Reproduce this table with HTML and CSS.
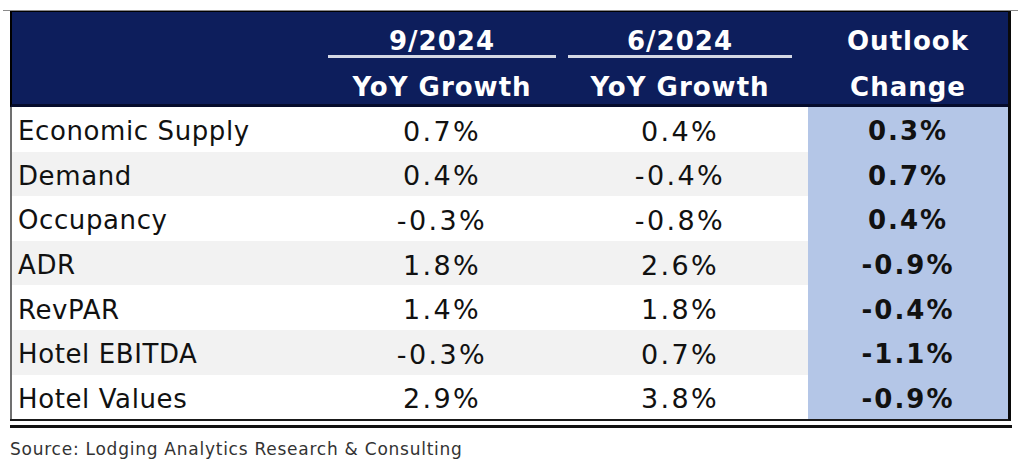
FILE: index.html
```html
<!DOCTYPE html>
<html>
<head>
<meta charset="utf-8">
<link rel="stylesheet" href="styles.css">
</head>
<body>
<div class="page">
  <div class="frame">
    <div class="table">
      <div class="head">
        <div class="hcell"></div>
        <div class="hcell">
          <div class="hline">9/2024</div>
          <div class="uline"></div>
          <div class="hline">YoY Growth</div>
        </div>
        <div class="hcell c3">
          <div class="hline">6/2024</div>
          <div class="uline"></div>
          <div class="hline">YoY Growth</div>
        </div>
        <div class="hcell">
          <div class="hline">Outlook</div>
          <div class="uline none"></div>
          <div class="hline">Change</div>
        </div>
      </div>
      <div class="body">
        <div class="row"><div class="lbl">Economic Supply</div><div class="num">0.7%</div><div class="num c3">0.4%</div><div class="chg">0.3%</div></div>
        <div class="row alt"><div class="lbl">Demand</div><div class="num">0.4%</div><div class="num c3">-0.4%</div><div class="chg">0.7%</div></div>
        <div class="row"><div class="lbl">Occupancy</div><div class="num">-0.3%</div><div class="num c3">-0.8%</div><div class="chg">0.4%</div></div>
        <div class="row alt"><div class="lbl">ADR</div><div class="num">1.8%</div><div class="num c3">2.6%</div><div class="chg">-0.9%</div></div>
        <div class="row"><div class="lbl">RevPAR</div><div class="num">1.4%</div><div class="num c3">1.8%</div><div class="chg">-0.4%</div></div>
        <div class="row alt"><div class="lbl">Hotel EBITDA</div><div class="num">-0.3%</div><div class="num c3">0.7%</div><div class="chg">-1.1%</div></div>
        <div class="row"><div class="lbl">Hotel Values</div><div class="num">2.9%</div><div class="num c3">3.8%</div><div class="chg">-0.9%</div></div>
      </div>
    </div>
    <div class="thick"></div>
  </div>
  <div class="source">Source: Lodging Analytics Research &amp; Consulting</div>
</div>
</body>
</html>
```
FILE: styles.css
```css
html, body {
  margin: 0;
  padding: 0;
  background: #ffffff;
}
body {
  font-family: "DejaVu Sans", "Liberation Sans", sans-serif;
  color: #111111;
}
.page {
  padding: 10px 0 0 3px;
}
.frame {
  border-top: 1px solid #8a8a8a;
  width: 1008px;
  padding-left: 7px;
}
.table {
  width: 1001px;
  border-right: 3px solid #0a0a0a;
  border-bottom: 2px solid #1a1a1a;
  box-sizing: border-box;
}
.head {
  display: grid;
  grid-template-columns: 310px 240px 246px 200px;
  background: #0d1e5c;
  border-top: 1px solid #000;
  border-left: 2px solid #000;
  border-bottom: 3px solid #050c2c;
  height: 92px;
}
.hcell {
  display: flex;
  flex-direction: column;
  align-items: center;
  padding-top: 14px;
  color: #ffffff;
  font-weight: bold;
  font-size: 26px;
  letter-spacing: 1px;
}
.hcell.c3 {
  padding-right: 10px;
}
.hline {
  height: 30px;
  line-height: 30px;
  white-space: nowrap;
}
.uline {
  align-self: stretch;
  margin: -1px 6px 14px;
  height: 3px;
  background: #d4d8e4;
}
.uline.none {
  background: transparent;
}
.body {
  border-left: 2px solid #707070;
}
.row {
  display: grid;
  grid-template-columns: 310px 240px 246px 200px;
  height: 44.6px;
  align-items: stretch;
  font-size: 26px;
  background: #ffffff;
}
.row.alt {
  background: #f2f2f2;
}
.row > div {
  display: flex;
  align-items: center;
  padding-top: 4px;
  box-sizing: border-box;
  white-space: nowrap;
}
.lbl {
  padding-left: 6px;
  letter-spacing: 0.6px;
}
.num {
  justify-content: center;
  font-size: 27px;
  letter-spacing: 2.4px;
}
.num.c3 {
  padding-right: 10px;
}
.chg {
  justify-content: center;
  background: #b4c6e7;
  font-weight: bold;
  letter-spacing: 2px;
}
.thick {
  margin-top: 4px;
  height: 3px;
  width: 1002px;
  background: #111111;
}
.source {
  margin-top: 11px;
  padding-left: 7px;
  font-size: 17px;
  letter-spacing: 0.75px;
  line-height: 20px;
  color: #333333;
}
```
